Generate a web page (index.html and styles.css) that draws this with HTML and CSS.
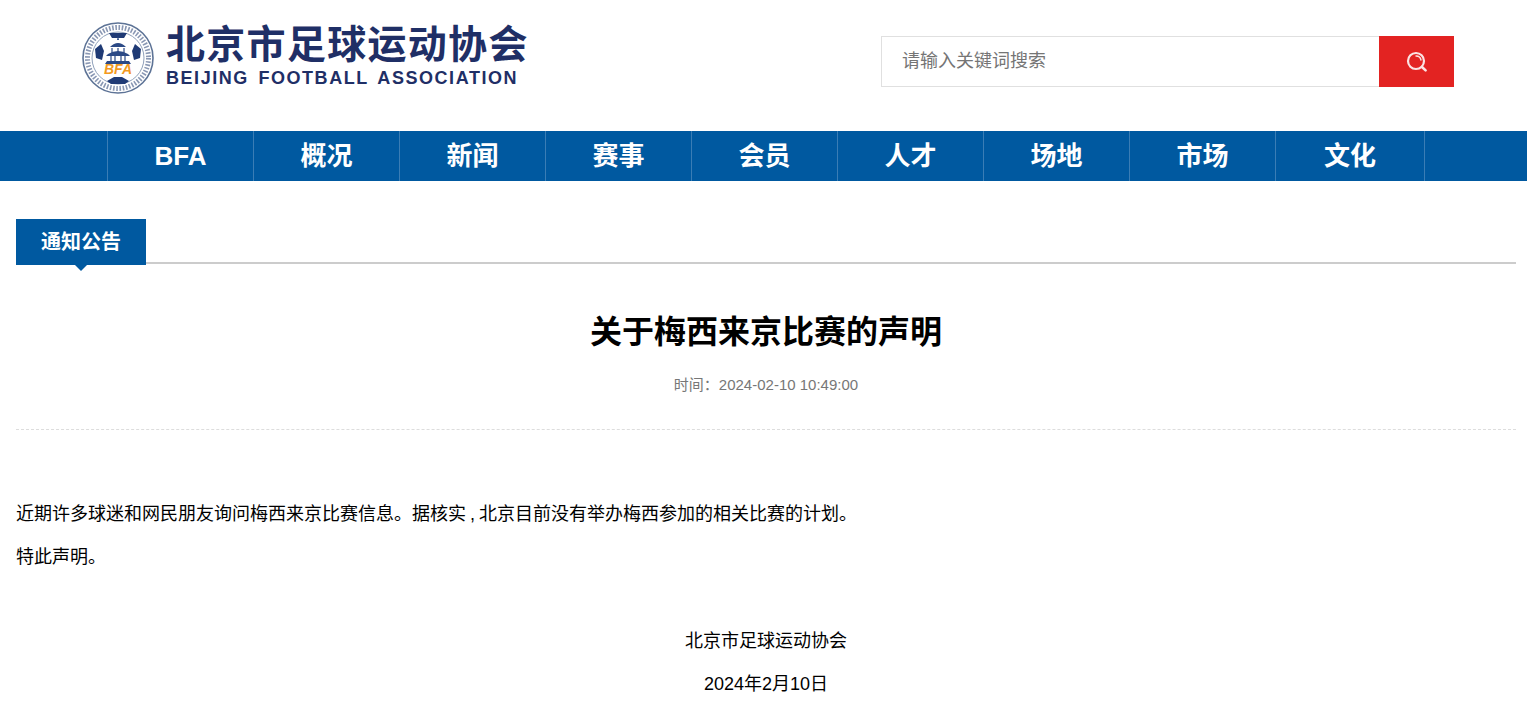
FILE: index.html
```html
<!DOCTYPE html>
<html lang="zh">
  <head>
    <meta charset="utf-8" />
    <meta name="viewport" content="width=device-width, initial-scale=1.0" />
    <title>关于梅西来京比赛的声明</title>
    <link rel="stylesheet" href="styles.css">
  </head>

  <body>
    <header class="top">
      <a class="logo" href="#">
        <svg class="badge" viewBox="0 0 72 72" width="72" height="72" aria-hidden="true">
          <circle cx="36" cy="36" r="35" fill="#fff" stroke="#5d7396" stroke-width="1.6" />
          <circle cx="36" cy="36" r="26" fill="#fff" stroke="#8fa0ba" stroke-width="1" />
          <circle cx="36" cy="36" r="30.5" fill="none" stroke="#4a5f8a" stroke-width="5" stroke-dasharray="1.6 1.6" opacity="0.65" />
          <path d="M13 27 l6 -5 l3 7 l-2 9 l-6 -2z" fill="#1f3a75" />
          <path d="M59 27 l-6 -5 l-3 7 l2 9 l6 -2z" fill="#1f3a75" />
          <path d="M27 11 h18 l-3 5 h-12z" fill="#1f3a75" />
          <path d="M25 59 l7 -4 h8 l7 4 l-4 3 h-14z" fill="#1f3a75" />
          <path d="M36 14 l1 4 h-2z M28 25 q8 -8 16 0z M26 32 q10 -6 20 0 l2 2 h-24z M25 39 h22 l2 3 h-26z" fill="#2c4a86" />
          <path d="M30 26 v5 M36 26 v5 M42 26 v5 M29 34 v5 M33 34 v5 M39 34 v5 M43 34 v5" stroke="#2c4a86" stroke-width="1.2" />
          <text class="badge-text" x="36" y="52">BFA</text>
        </svg>
        <span class="logo-text">
          <strong>北京市足球运动协会</strong>
          <em>BEIJING FOOTBALL ASSOCIATION</em>
        </span>
      </a>
      <form class="search">
        <input type="text" placeholder="请输入关键词搜索" />
        <button type="button" aria-label="搜索">
          <svg viewBox="0 0 24 24" width="24" height="24" fill="none" stroke="#fbe3e3" stroke-linecap="round">
            <circle cx="11" cy="11" r="8" stroke-width="2.2" />
            <path d="M17 17 l3.6 3.4" stroke-width="2.6" />
            <path d="M11 6 a5 5 0 0 1 5 4" stroke-width="1.4" />
          </svg>
        </button>
      </form>
    </header>

    <nav class="menu">
      <a href="#">BFA</a>
      <a href="#">概况</a>
      <a href="#">新闻</a>
      <a href="#">赛事</a>
      <a href="#">会员</a>
      <a href="#">人才</a>
      <a href="#">场地</a>
      <a href="#">市场</a>
      <a href="#" class="last">文化</a>
    </nav>

    <main class="content">
      <div class="tab-bar">
        <h2 class="tab">通知公告</h2>
      </div>

      <div class="article-head">
        <h1>关于梅西来京比赛的声明</h1>
        <p class="time">时间：2024-02-10 10:49:00</p>
      </div>

      <article class="body">
        <p>近期许多球迷和网民朋友询问梅西来京比赛信息。据核实<span class="comma">,</span>北京目前没有举办梅西参加的相关比赛的计划。</p>
        <p>特此声明。</p>
        <p class="blank">&nbsp;</p>
        <p class="center">北京市足球运动协会</p>
        <p class="center">2024年2月10日</p>
      </article>
    </main>
  </body>
</html>
```

FILE: styles.css
```css
* {
  box-sizing: border-box;
}

body {
  margin: 0;
  font-family: "Liberation Sans", "Noto Sans CJK SC", sans-serif;
  color: #000;
  background: #fff;
}

a {
  text-decoration: none;
  color: inherit;
}

.top {
  display: flex;
  justify-content: space-between;
  height: 131px;
  padding: 22px 73px 0 82px;
}

.logo {
  display: flex;
  gap: 12px;
  height: 74px;
}

.badge-text {
  font: italic bold 14px "Liberation Sans", sans-serif;
  fill: #f39a1e;
  text-anchor: middle;
}

.logo-text {
  display: flex;
  flex-direction: column;
  color: #1f2f66;
}

.logo-text strong {
  font-size: 39px;
  line-height: 46px;
  letter-spacing: 1.3px;
  white-space: nowrap;
}

.logo-text em {
  font-style: normal;
  font-weight: bold;
  font-size: 18px;
  line-height: 20px;
  letter-spacing: 1.55px;
  word-spacing: 3px;
  white-space: nowrap;
}

.search {
  display: flex;
  width: 573px;
  height: 51px;
  margin-top: 14px;
}

.search input {
  flex: 1;
  height: 51px;
  padding: 0 20px;
  border: 1px solid #e0e0e0;
  border-right: 0;
  outline: 0;
  font: 18px "Liberation Sans", "Noto Sans CJK SC", sans-serif;
}

.search input::placeholder {
  color: #757575;
}

.search button {
  display: flex;
  align-items: center;
  justify-content: center;
  width: 75px;
  border: 0;
  padding: 0;
  background: #e32322;
}

.menu {
  display: flex;
  height: 50px;
  padding-left: 107px;
  background: #0059a0;
}

.menu a {
  width: 146px;
  border-left: 1px solid #3a7db5;
  text-align: center;
  font-size: 26px;
  font-weight: bold;
  line-height: 50px;
  color: #fff;
}

.menu a.last {
  width: 150px;
  border-right: 1px solid #3a7db5;
}

.content {
  padding: 38px 11px 0 16px;
}

.tab-bar {
  height: 45px;
  border-bottom: 2px solid #ccc;
}

.tab {
  position: relative;
  width: 130px;
  height: 46px;
  margin: 0;
  background: #0059a0;
  color: #fff;
  text-align: center;
  font-size: 20px;
  font-weight: bold;
  line-height: 46px;
}

.tab::after {
  content: "";
  position: absolute;
  left: 59px;
  top: 46px;
  border: 6px solid transparent;
  border-bottom: 0;
  border-top-color: #0059a0;
}

.article-head {
  height: 166px;
  padding-top: 43px;
  border-bottom: 1px dashed #ddd;
  text-align: center;
}

.article-head h1 {
  margin: 0;
  font-size: 32px;
  line-height: 50px;
  font-weight: bold;
}

.time {
  margin: 16px 0 0;
  font-size: 15px;
  line-height: 24px;
  color: #777;
}

.body {
  padding-top: 63px;
  font-size: 18px;
  line-height: 43px;
}

.body p {
  margin: 0;
}

.comma {
  font-family: "Liberation Sans", sans-serif;
  padding: 0 4px;
}

.blank {
  height: 41px;
}

.center {
  text-align: center;
}
```
